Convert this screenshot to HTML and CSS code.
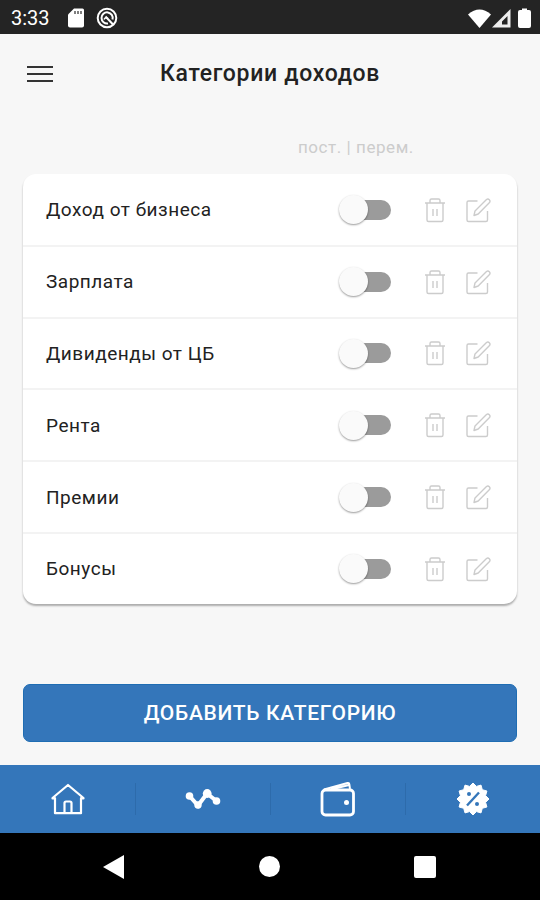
FILE: index.html
```html
<!DOCTYPE html>
<html lang="ru">

<head>
    <meta charset="UTF-8">
    <meta name="viewport" content="width=device-width, initial-scale=1.0">
    <title>Категории доходов</title>
    <link rel="stylesheet" href="styles.css">
</head>

<body>
    <svg class="sprite" width="0" height="0">
        <symbol id="icon-trash" viewBox="0 0 22 26">
            <path d="M1 6h20M3 6v17q0 1.500 1.500 1.500h13q1.500 0 1.500-1.500V6M6 6V3.500q0-1.500 1.500-1.500h7Q16 2 16 3.500V6M9 12v7M13 12v7" />
        </symbol>
        <symbol id="icon-edit" viewBox="0 0 26 26">
            <path d="M12.500 4H3.500Q2 4 2 5.500v17.500Q2 24.500 3.500 24.500H21q1.500 0 1.500-1.500V14M9 18.500l1-4.500L21.500 2.500q1.500-1 2.800.2T24.500 5.500L13.200 17z" />
        </symbol>
    </svg>

    <div class="status-bar">
        <span class="time">3:33</span>
        <svg class="sd-card" width="16" height="20" viewBox="0 0 16 20">
            <path fill="#fff" d="M6 .5h8.500q1.500 0 1.500 1.500v15.500q0 2-2 2H2q-2 0-2-2V6.500z" />
            <path stroke="#555" stroke-width="1.500" d="M7 3v3M10 3v3M13 3v3" />
        </svg>
        <svg class="circle-icon" width="22" height="22" viewBox="0 0 22 22" fill="none" stroke="#fff">
            <circle cx="11" cy="11" r="9.300" stroke-width="2" />
            <path stroke-width="2" d="M12 16.500a5.600 5.600 0 1 1 4.500-4M9.500 9.500l8 8.500" />
            <path stroke-width="1.500" d="M8 12.500q1.500-3 4-1" />
        </svg>
        <svg class="signals" width="66" height="22" viewBox="0 0 66 22">
            <path fill="#fff" d="M12.500 21L1 7.500Q12.500-2.500 24 7.500z" />
            <path fill="#eee" fill-rule="evenodd" d="M43.500 2v18.500H25zM40.500 9v8.500H35V14.500z" />
            <path fill="#fff" d="M55 1.500h5V3h2q2 0 2 2v14q0 2-2 2h-9q-2 0-2-2V5q0-2 2-2h2z" />
        </svg>
    </div>

    <header class="header">
        <div class="burger"><span></span><span></span><span></span></div>
        <h1>Категории доходов</h1>
    </header>

    <main class="content">
        <div class="hint">пост. | перем.</div>
        <ul class="list">
            <li class="row">
                <span class="name">Доход от бизнеса</span>
                <span class="switch"></span>
                <svg class="icon trash"><use href="#icon-trash" /></svg>
                <svg class="icon edit"><use href="#icon-edit" /></svg>
            </li>
            <li class="row">
                <span class="name">Зарплата</span>
                <span class="switch"></span>
                <svg class="icon trash"><use href="#icon-trash" /></svg>
                <svg class="icon edit"><use href="#icon-edit" /></svg>
            </li>
            <li class="row">
                <span class="name">Дивиденды от ЦБ</span>
                <span class="switch"></span>
                <svg class="icon trash"><use href="#icon-trash" /></svg>
                <svg class="icon edit"><use href="#icon-edit" /></svg>
            </li>
            <li class="row">
                <span class="name">Рента</span>
                <span class="switch"></span>
                <svg class="icon trash"><use href="#icon-trash" /></svg>
                <svg class="icon edit"><use href="#icon-edit" /></svg>
            </li>
            <li class="row">
                <span class="name">Премии</span>
                <span class="switch"></span>
                <svg class="icon trash"><use href="#icon-trash" /></svg>
                <svg class="icon edit"><use href="#icon-edit" /></svg>
            </li>
            <li class="row">
                <span class="name">Бонусы</span>
                <span class="switch"></span>
                <svg class="icon trash"><use href="#icon-trash" /></svg>
                <svg class="icon edit"><use href="#icon-edit" /></svg>
            </li>
        </ul>
        <button class="add-button">ДОБАВИТЬ КАТЕГОРИЮ</button>
    </main>

    <nav class="tabs">
        <a class="tab">
            <svg width="36" height="36" viewBox="0 0 36 36" fill="none" stroke="#fff" stroke-width="2.200" stroke-linejoin="round" stroke-linecap="round">
                <path d="M5 17v15.200h26V17M2.500 17.500h2.500M31 17.500h2.500M2.500 17L18 4l15.500 13M14.500 32V22q0-1.500 1.500-1.500h4q1.500 0 1.500 1.500v10" />
            </svg>
        </a>
        <a class="tab">
            <svg width="36" height="36" viewBox="0 0 36 36" fill="#fff">
                <path fill="none" stroke="#fff" stroke-width="4" d="M4.500 15l8.500 9.500 9-12 9.500 7.500" />
                <circle cx="4.500" cy="15" r="3.800" />
                <circle cx="13" cy="24" r="3.700" />
                <circle cx="22.200" cy="12.500" r="4.400" />
                <circle cx="31.500" cy="20" r="3.800" />
            </svg>
        </a>
        <a class="tab">
            <svg width="36" height="36" viewBox="0 0 36 36" fill="none" stroke="#fff" stroke-width="2.800" stroke-linejoin="round">
                <rect x="2" y="9" width="31.500" height="25" rx="3.500" />
                <path d="M4 8.500L27.500 2q1.500-.3 1.800 1.200L30 8M11 8.500l18-4.500" stroke-width="2" />
                <circle cx="26.500" cy="21.500" r="2.500" fill="#fff" stroke="none" />
            </svg>
        </a>
        <a class="tab">
            <svg width="36" height="36" viewBox="-18 -18 36 36">
                <path fill="#fff" stroke="#fff" stroke-linejoin="round" d="M0-16L3.400-12.600 8-13.900 9.300-9.300 13.900-8 12.600-3.400 16 0 12.600 3.400 13.900 8 9.300 9.300 8 13.900 3.400 12.600 0 16-3.400 12.600-8 13.900-9.300 9.300-13.900 8-12.600 3.400-16 0-12.600-3.400-13.900-8-9.300-9.300-8-13.900-3.400-12.600z" />
                <path stroke="#3476ba" stroke-width="2.400" d="M-6 6.500L6-6.500" />
                <circle cx="-4" cy="-5" r="2" fill="#3476ba" />
                <circle cx="4" cy="5" r="2" fill="#3476ba" />
            </svg>
        </a>
    </nav>

    <div class="system-nav">
        <svg width="22" height="24" viewBox="0 0 22 24"><path fill="#fff" d="M0 12L21 0v24z" /></svg>
        <span class="home"></span>
        <span class="recent"></span>
    </div>
</body>

</html>
```
FILE: styles.css
```css
* {
    box-sizing: border-box;
}

body {
    margin: 0;
    height: 900px;
    display: flex;
    flex-direction: column;
    background: #f7f7f7;
    color: #222;
    font-family: Roboto, sans-serif;
    overflow: hidden;
}

.sprite {
    display: none;
}

.status-bar {
    height: 34px;
    flex: none;
    display: flex;
    align-items: center;
    padding: 1px 7px 0 11px;
    background: #242424;
    color: #fff;
}

.time {
    width: 57px;
    font-size: 20px;
}

.circle-icon {
    margin-left: 12px;
}

.signals {
    margin-left: auto;
}

.header {
    height: 79px;
    flex: none;
    display: grid;
    grid-template-columns: 26px 1fr 26px;
    align-items: center;
    padding: 0 27px;
}

.burger {
    display: grid;
    gap: 5px;
}

.burger span {
    height: 2px;
    background: #333;
}

h1 {
    margin: 0;
    text-align: center;
    font-size: 23px;
    font-weight: 500;
    letter-spacing: 0.7px;
}

.content {
    flex: 1;
    padding: 24px 23px 0;
}

.hint {
    height: 37px;
    padding-left: 275px;
    line-height: 21px;
    font-size: 17px;
    letter-spacing: 0.55px;
    color: #ccc;
}

.list {
    height: 430px;
    margin: 0;
    padding: 1px 0 0;
    display: grid;
    grid-template-rows: repeat(5, 71.8px) 1fr;
    list-style: none;
    background: #fff;
    border-radius: 13px;
    box-shadow: 0 2px 2px rgba(0, 0, 0, 0.3);
}

.row {
    display: flex;
    align-items: center;
    padding: 0 26px 0 23px;
    border-bottom: 2px solid #f3f3f3;
}

.row:last-child {
    border-bottom: none;
}

.name {
    flex: 1;
    font-size: 19px;
    letter-spacing: 0.52px;
}

.switch {
    width: 49px;
    height: 20px;
    margin-right: 33px;
    display: flex;
    align-items: center;
    border-radius: 10px;
    background: #9b9b9b;
}

.switch::before {
    content: "";
    width: 29px;
    height: 29px;
    flex: none;
    margin-left: -3px;
    border-radius: 50%;
    background: #fafafa;
    box-shadow: 0 1px 2px rgba(0, 0, 0, 0.4);
}

.icon {
    fill: none;
    stroke: #ccc;
    stroke-width: 1.4;
    stroke-linejoin: round;
}

.trash {
    width: 22px;
    height: 26px;
    margin-right: 19px;
}

.edit {
    width: 26px;
    height: 26px;
}

.add-button {
    width: 100%;
    height: 58px;
    margin-top: 80px;
    padding: 0 0 1px;
    border: 1px solid #1f6db3;
    border-radius: 7px;
    background: #3476ba;
    color: #fff;
    font-family: inherit;
    font-size: 21px;
    font-weight: 500;
    letter-spacing: 0.7px;
}

.tabs {
    height: 68px;
    flex: none;
    display: grid;
    grid-template-columns: repeat(4, 1fr);
    align-items: center;
    background: #3476ba;
}

.tab {
    height: 32px;
    display: flex;
    align-items: center;
    justify-content: center;
}

.tab + .tab {
    border-left: 1px solid #2d6bab;
}

.system-nav {
    height: 67px;
    flex: none;
    display: flex;
    align-items: center;
    justify-content: space-between;
    padding: 0 104px 0 103px;
    background: #000;
}

.home {
    width: 21px;
    height: 21px;
    border-radius: 50%;
    background: #fff;
}

.recent {
    width: 22px;
    height: 22px;
    border-radius: 2px;
    background: #fff;
}
```
